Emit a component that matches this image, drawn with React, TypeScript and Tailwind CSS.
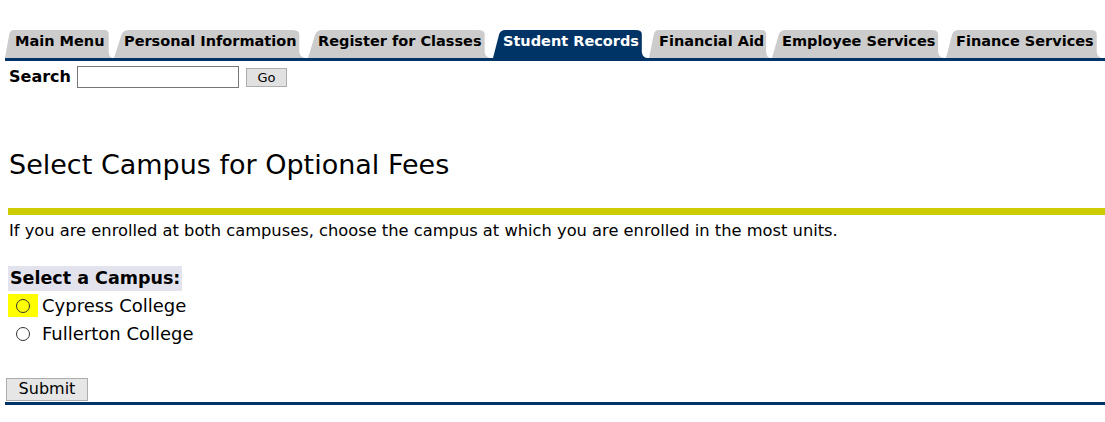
import React from 'react';

const tabs = [
  { label: 'Main Menu', w: 'w-[108px]' },
  { label: 'Personal Information', w: 'w-[193px]' },
  { label: 'Register for Classes', w: 'w-[184px]' },
  { label: 'Student Records', w: 'w-[155px]', active: true },
  { label: 'Financial Aid', w: 'w-[122px]' },
  { label: 'Employee Services', w: 'w-[173px]' },
  { label: 'Finance Services', w: 'w-[157px]' },
];

const TabShape: React.FC<{ active?: boolean }> = ({ active }) => (
  <svg
    className="absolute inset-0 h-full w-full"
    viewBox="0 0 100 28"
    preserveAspectRatio="none"
  >
    <path
      d="M0,28 L4,4 Q5,0 8,0 L92,0 Q96,0 96,4 L96,22 Q96.5,28 100,28 Z"
      fill={active ? '#003366' : '#cccccc'}
    />
  </svg>
);

const App: React.FC = () => {
  return (
    <div className="min-h-[422px] bg-white font-['DejaVu_Sans',Verdana,sans-serif] text-black">
      <div className="flex gap-px pl-[5px] pt-[30px]">
        {tabs.map((t) => (
          <div key={t.label} className={`relative h-[28px] ${t.w}`}>
            <TabShape active={t.active} />
            <span
              className={`relative block whitespace-nowrap pl-[10px] pt-[1px] text-[14.5px] font-bold leading-[20px] ${
                t.active ? 'text-white' : 'text-black'
              }`}
            >
              {t.label}
            </span>
          </div>
        ))}
      </div>
      <div className="ml-[5px] h-[3px] bg-[#003366]" />

      <div className="flex items-center pl-[9px] pt-[4px]">
        <span className="text-[16px] font-bold">Search</span>
        <input
          type="text"
          className="ml-[6px] h-[22px] w-[162px] border border-[#767676] bg-white"
        />
        <button className="ml-[7px] h-[19px] w-[41px] border border-[#adadad] bg-[#e1e1e1] text-[13px] leading-none">
          Go
        </button>
      </div>

      <h2 className="pl-[9px] pt-[60px] text-[27px] leading-[32px] font-normal">
        Select Campus for Optional Fees
      </h2>

      <div className="ml-[8px] mt-[27px] h-[7px] bg-[#cccc00]" />

      <p className="pl-[9px] pt-[6px] text-[16.3px] leading-[20px]">
        If you are enrolled at both campuses, choose the campus at which you are enrolled in the most units.
      </p>

      <div className="ml-[8px] mt-[25px] inline-block bg-[#e3e3ee] px-[2px] text-[17.5px] font-bold leading-[25px]">
        Select a Campus:
      </div>

      <div className="pl-[8px]">
        <label className="mt-[2px] flex h-[25px] items-center">
          <span className="flex h-[23px] w-[30px] items-center justify-center bg-[#ffff00]">
            <input
              type="radio"
              name="campus"
              className="h-[14px] w-[14px] appearance-none rounded-full border border-[#333] bg-transparent"
            />
          </span>
          <span className="pl-[4px] text-[18px]">Cypress College</span>
        </label>
        <label className="mt-[3px] flex h-[25px] items-center">
          <span className="flex h-[23px] w-[30px] items-center justify-center">
            <input
              type="radio"
              name="campus"
              className="h-[14px] w-[14px] appearance-none rounded-full border border-[#333] bg-white"
            />
          </span>
          <span className="pl-[4px] text-[18px]">Fullerton College</span>
        </label>
      </div>

      <div className="pl-[6px] pt-[31px]">
        <button className="h-[23px] w-[82px] border border-[#adadad] bg-[#e6e6e6] text-[16px] leading-none">
          Submit
        </button>
      </div>
      <div className="ml-[5px] mt-px h-[3px] bg-[#003366]" />
    </div>
  );
};

export default App;
